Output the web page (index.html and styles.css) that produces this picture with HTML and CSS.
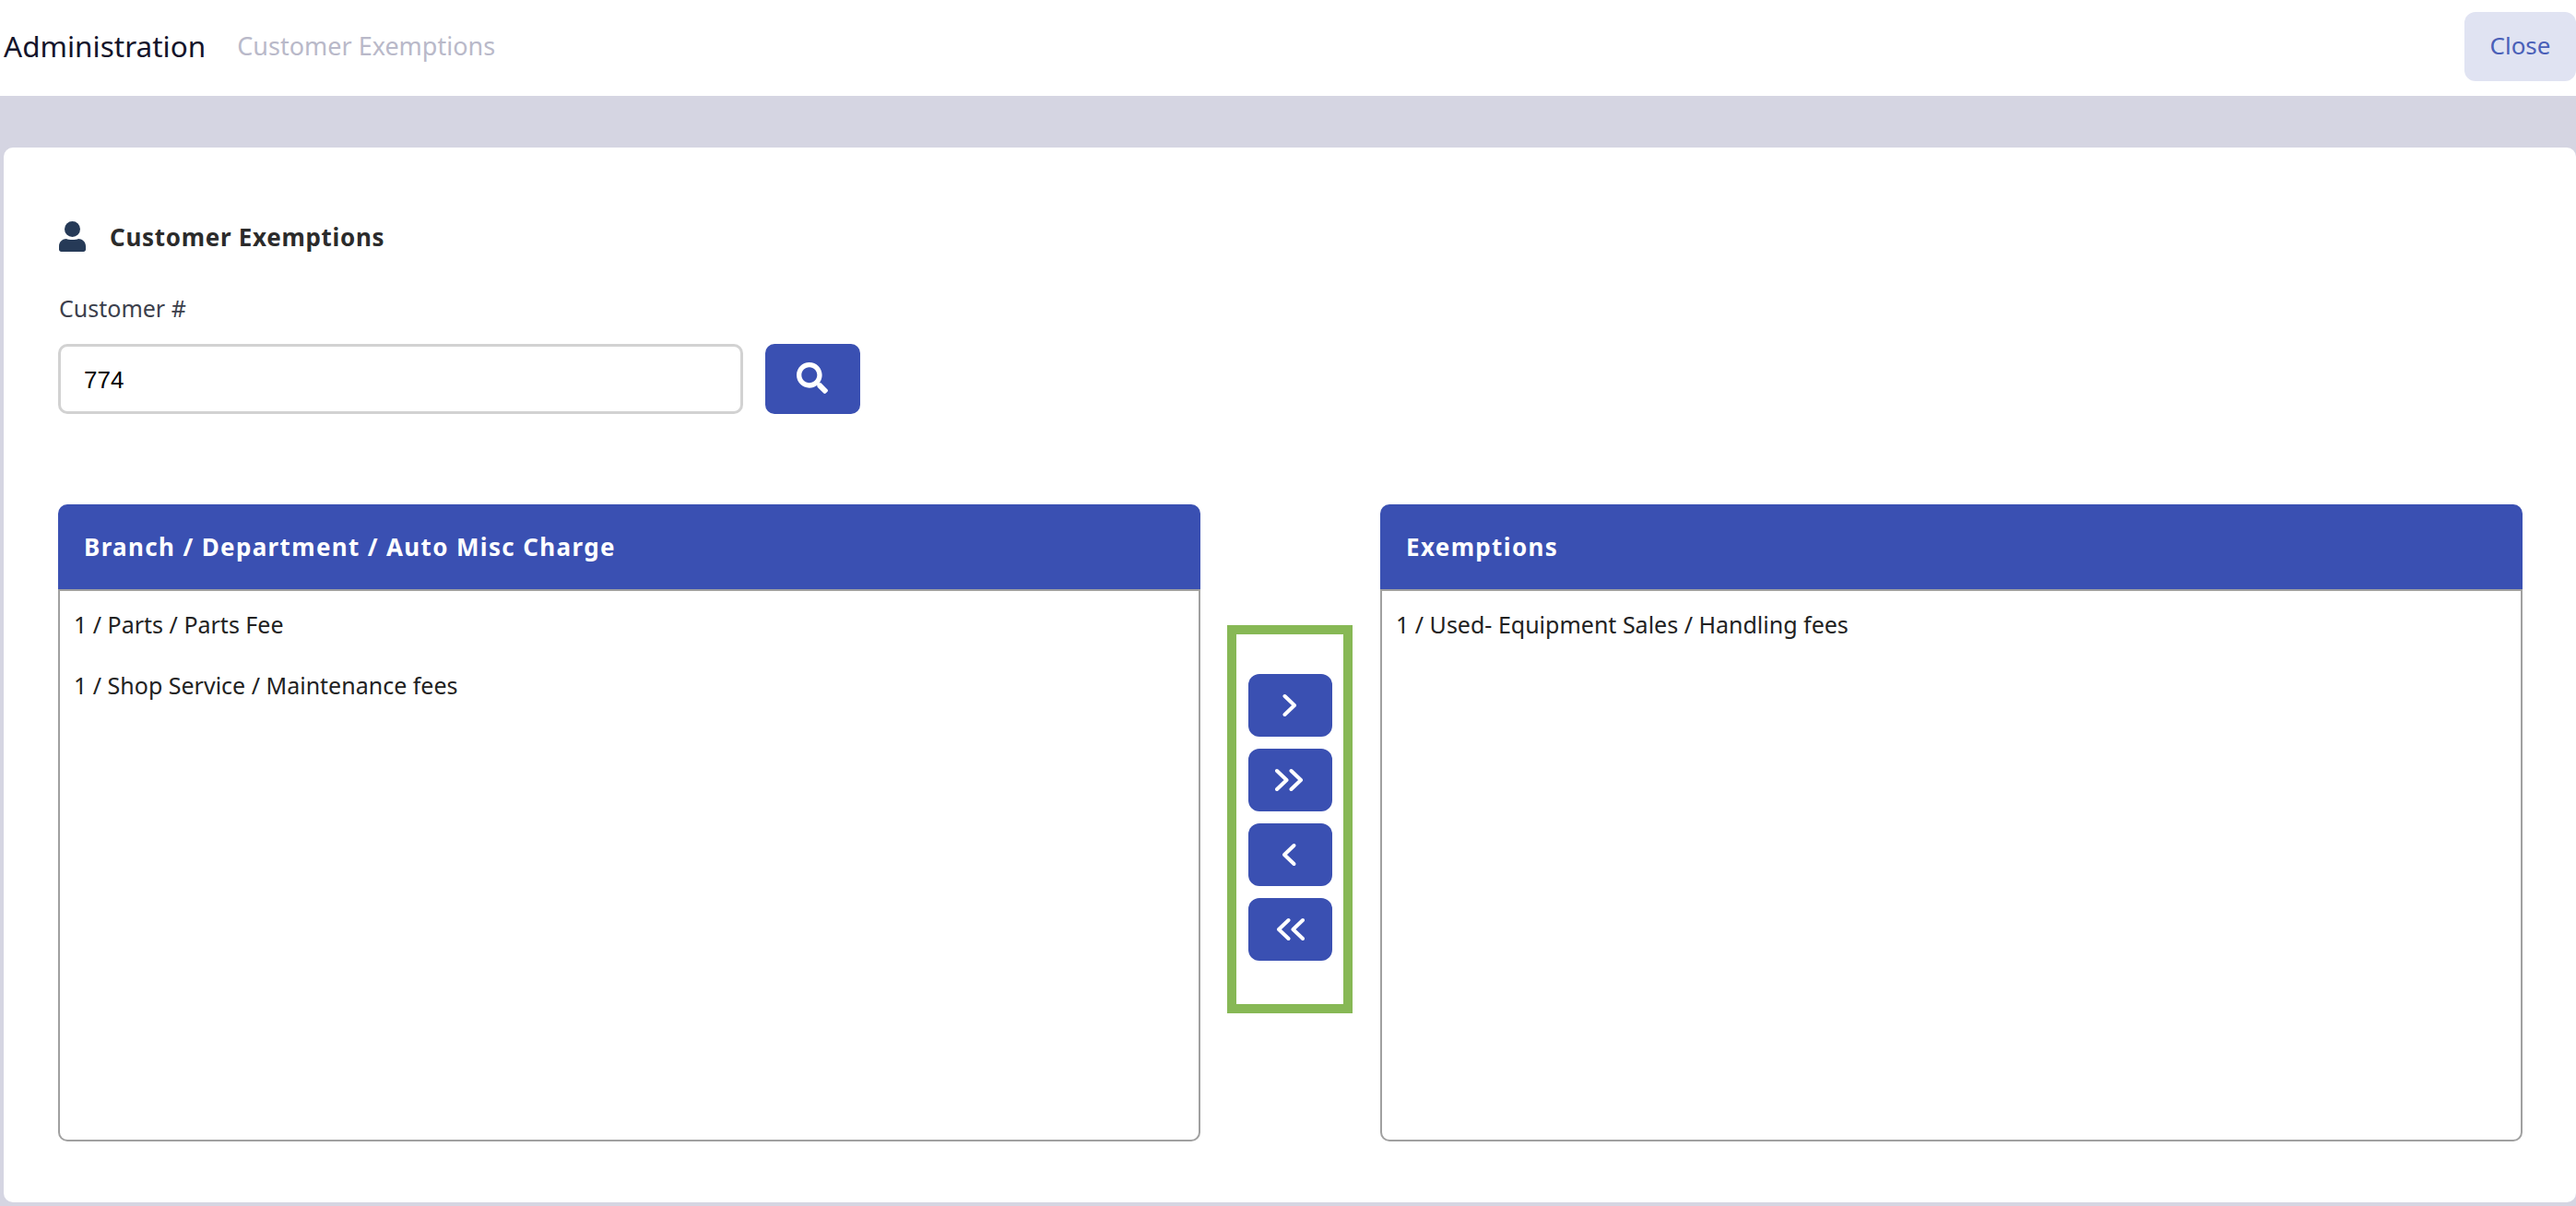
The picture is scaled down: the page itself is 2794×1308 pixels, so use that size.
FILE: index.html
```html
<!DOCTYPE html>
<html lang="en">
<head>
<meta charset="utf-8">
<title>Customer Exemptions</title>
<link rel="stylesheet" href="styles.css">
</head>
<body>
<header class="topbar">
  <div class="crumbs">
    <span class="crumb-main">Administration</span>
    <span class="crumb-sub">Customer Exemptions</span>
  </div>
  <button class="close-btn" type="button">Close</button>
</header>
<main class="card">
  <div class="section-head">
    <svg class="user-icon" viewBox="0 0 29 33" aria-hidden="true">
      <circle cx="14.5" cy="8.5" r="8.5"/>
      <path d="M0 27C0 22 4 19 8 19C10 20.3 19 20.3 21 19C25 19 29 22 29 27V30.5C29 32 28 33 26.5 33H2.5C1 33 0 32 0 30.5Z"/>
    </svg>
    <h1 class="section-title">Customer Exemptions</h1>
  </div>
  <label class="field-label" for="customer">Customer #</label>
  <div class="search-row">
    <input class="search-input" id="customer" type="text" value="774">
    <button class="search-btn" type="button" aria-label="Search">
      <svg class="search-icon" viewBox="0 0 512 512" aria-hidden="true"><path d="M505 442.7L405.3 343c-4.5-4.5-10.6-7-17-7H372c27.6-35.3 44-79.7 44-128C416 93.1 322.9 0 208 0S0 93.1 0 208s93.1 208 208 208c48.3 0 92.7-16.4 128-44v16.3c0 6.4 2.5 12.5 7 17l99.7 99.7c9.4 9.4 24.6 9.4 33.9 0l28.3-28.3c9.4-9.4 9.4-24.6.1-34zM208 336c-70.7 0-128-57.2-128-128 0-70.7 57.2-128 128-128 70.7 0 128 57.2 128 128 0 70.7-57.2 128-128 128z"/></svg>
    </button>
  </div>
  <div class="transfer">
    <section class="panel">
      <div class="panel-head">Branch / Department / Auto Misc Charge</div>
      <ul class="panel-body">
        <li class="panel-item">1 / Parts / Parts Fee</li>
        <li class="panel-item">1 / Shop Service / Maintenance fees</li>
      </ul>
    </section>
    <div class="mover-col">
      <div class="mover-box">
        <button class="move-btn" type="button" aria-label="Move right"><svg class="chev" viewBox="0 0 32 26"><path d="M10.5 3L21 13L10.5 23"/></svg></button>
        <button class="move-btn" type="button" aria-label="Move all right"><svg class="chev" viewBox="0 0 32 26"><path d="M2 3L12.5 13L2 23M17.5 3L28 13L17.5 23"/></svg></button>
        <button class="move-btn" type="button" aria-label="Move left"><svg class="chev" viewBox="0 0 32 26"><path d="M20.5 3L10 13L20.5 23"/></svg></button>
        <button class="move-btn" type="button" aria-label="Move all left"><svg class="chev" viewBox="0 0 32 26"><path d="M14.5 3L4 13L14.5 23M30 3L19.5 13L30 23"/></svg></button>
      </div>
    </div>
    <section class="panel">
      <div class="panel-head">Exemptions</div>
      <ul class="panel-body">
        <li class="panel-item">1 / Used- Equipment Sales / Handling fees</li>
      </ul>
    </section>
  </div>
</main>
</body>
</html>
```
FILE: styles.css
```css
* { box-sizing: border-box; }
html, body { height: 100%; }
body {
  margin: 0;
  display: flex;
  flex-direction: column;
  background: linear-gradient(#d1d1dd, #d5d5e2 56px);
  background-repeat: no-repeat;
  background-color: #d5d5e2;
  font-family: "Noto Sans", "Open Sans", sans-serif;
  overflow: hidden;
}
.topbar {
  height: 104px;
  flex: none;
  background: #fff;
  display: flex;
  align-items: center;
  justify-content: space-between;
  padding-left: 4px;
}
.crumbs { display: flex; align-items: center; gap: 34px; margin-top: -5px; }
.crumb-main { font-size: 31.5px; color: #14142b; }
.crumb-sub { font-size: 27px; color: #b9b9c9; }
.close-btn {
  width: 121px;
  height: 75px;
  margin-top: -3px;
  padding: 0 0 3px;
  border: none;
  border-radius: 12px;
  background: #e0e3f2;
  color: #4a5fb8;
  font: 26px "Noto Sans", sans-serif;
}
.card {
  flex: 1;
  margin: 56px 0 4px 4px;
  padding: 80px 58px 66px 59px;
  background: #fff;
  border-radius: 10px;
  display: flex;
  flex-direction: column;
}
.section-head { display: flex; align-items: center; gap: 26px; height: 33px; padding-left: 1px; }
.user-icon { width: 29px; height: 33px; fill: #263a57; }
.section-title { margin: 0; font-size: 26px; font-weight: 700; letter-spacing: 0.7px; color: #2b2b2b; }
.field-label { display: block; margin-top: 46px; padding-left: 1px; line-height: 30px; font-size: 25px; color: #3c3f4c; }
.search-row { display: flex; gap: 24px; margin-top: 24px; }
.search-input {
  width: 743px;
  height: 76px;
  padding: 2px 25px 0;
  border: 3px solid #d2d2d2;
  border-radius: 10px;
  background: #fff;
  color: #000;
  font: 26px "Liberation Sans", Arial, sans-serif;
  outline: none;
}
.search-btn {
  width: 103px;
  height: 76px;
  padding: 0;
  border: none;
  border-radius: 10px;
  background: #3a50b2;
  display: flex;
  align-items: center;
  justify-content: center;
}
.search-icon { width: 34px; height: 34px; fill: #fff; margin: -3px 0 0 -1px; }
.transfer { flex: 1; display: flex; margin-top: 98px; min-height: 0; }
.panel { flex: 1; display: flex; flex-direction: column; min-width: 0; }
.panel-head {
  height: 94px;
  flex: none;
  display: flex;
  align-items: center;
  padding: 0 0 1px 28px;
  background: #3a50b2;
  border-bottom: 2px solid #a0a0a0;
  border-radius: 10px 10px 0 0;
  color: #fff;
  font-size: 26px;
  font-weight: 700;
  letter-spacing: 1.35px;
}
.panel-body {
  flex: 1;
  margin: 0;
  padding: 3px 0 0 15px;
  list-style: none;
  border: 2px solid #a0a0a0;
  border-top: none;
  border-radius: 0 0 10px 10px;
}
.panel-item { height: 66px; display: flex; align-items: center; font-size: 25px; color: #222; }
.mover-col { width: 195px; flex: none; display: flex; justify-content: center; padding-top: 131px; }
.mover-box {
  width: 136px;
  height: 421px;
  margin-right: 1px;
  padding-top: 43px;
  border: 10px solid #87b855;
  display: flex;
  flex-direction: column;
  align-items: center;
  gap: 13px;
}
.move-btn {
  width: 91px;
  height: 68px;
  flex: none;
  padding: 0;
  border: none;
  border-radius: 12px;
  background: #3a50b2;
  display: flex;
  align-items: center;
  justify-content: center;
}
.chev { width: 32px; height: 26px; fill: none; stroke: #fff; stroke-width: 4; stroke-linecap: round; stroke-linejoin: round; }
```
